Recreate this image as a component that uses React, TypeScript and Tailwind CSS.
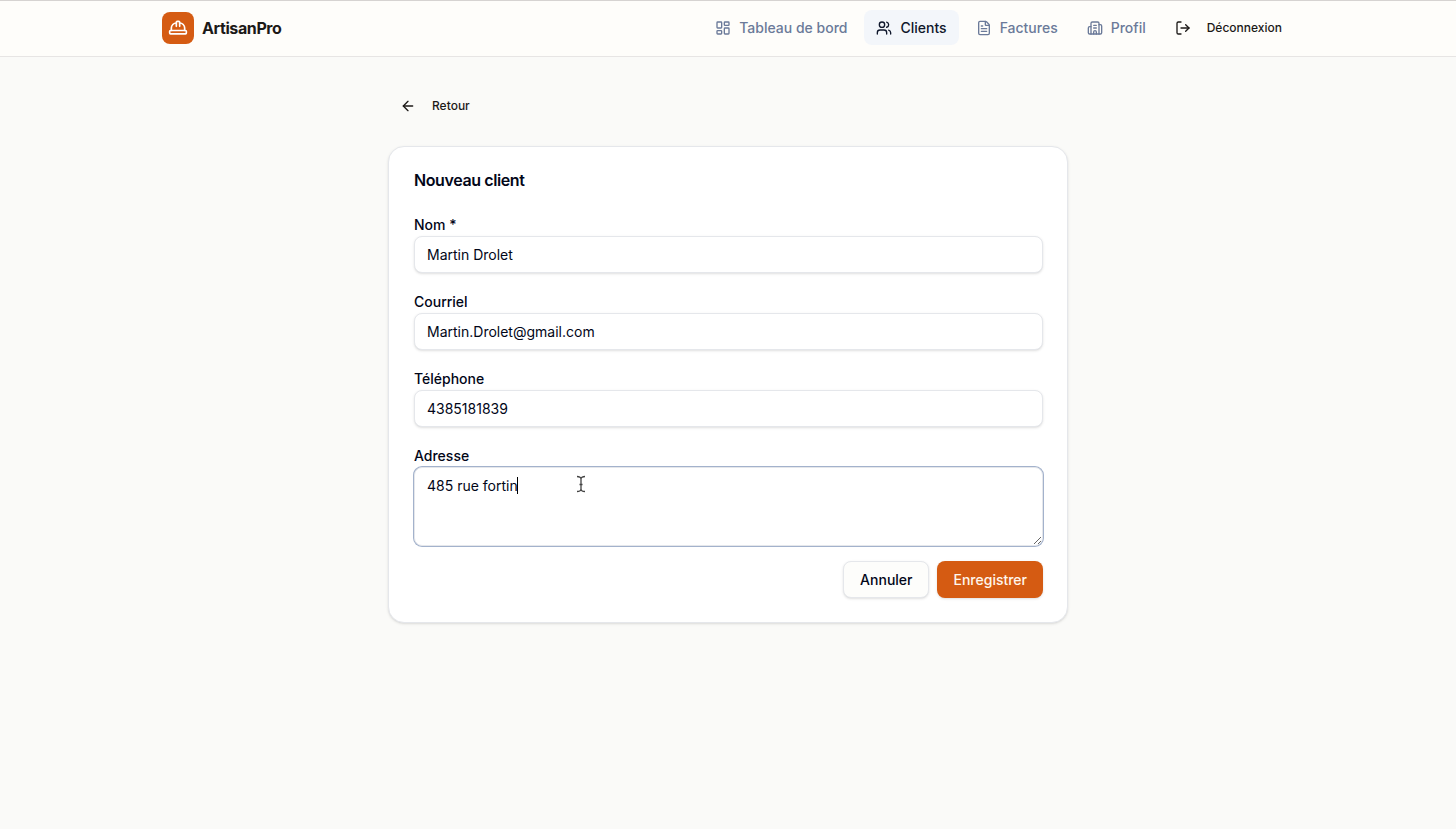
import { useState, type ReactNode } from 'react';
import {
  ArrowLeft,
  Building2,
  FileText,
  HardHat,
  LayoutDashboard,
  LogOut,
  Users,
  type LucideIcon,
} from 'lucide-react';

const NAV_ITEMS: { label: string; icon: LucideIcon; active?: boolean }[] = [
  { label: 'Tableau de bord', icon: LayoutDashboard },
  { label: 'Clients', icon: Users, active: true },
  { label: 'Factures', icon: FileText },
  { label: 'Profil', icon: Building2 },
];

const INPUT_CLASS =
  'block h-[37px] w-full rounded-lg border border-gray-200 bg-white px-3 text-[14px] text-slate-950 shadow-sm outline-none';

function Header() {
  return (
    <header className="border-y border-t-stone-300 border-b-stone-200 bg-[#fefdfa]">
      <div className="mx-auto flex h-[55px] max-w-[1132px] items-center justify-between pb-[2px]">
        <a href="#" className="flex items-center gap-2">
          <span className="flex size-8 items-center justify-center rounded-lg bg-[#d55b12] text-white">
            <HardHat size={20} />
          </span>
          <span className="text-[16px] font-bold tracking-tight text-stone-900">ArtisanPro</span>
        </a>
        <nav className="flex items-center gap-[5px]">
          {NAV_ITEMS.map(({ label, icon: Icon, active }) => (
            <a
              key={label}
              href="#"
              className={`flex h-[35px] items-center gap-2 rounded-lg px-3 text-[14px] font-medium ${
                active ? 'bg-[#f3f6fa] text-slate-900' : 'text-[#6b7a99]'
              }`}
            >
              <Icon size={16} />
              {label}
            </a>
          ))}
          <button
            type="button"
            className="flex h-8 items-center gap-4 rounded-lg px-3 text-[12px] font-medium text-stone-900"
          >
            <LogOut size={16} />
            Déconnexion
          </button>
        </nav>
      </div>
    </header>
  );
}

function Field({ id, label, children }: { id: string; label: string; children: ReactNode }) {
  return (
    <div>
      <label htmlFor={id} className="block pt-px text-[14px] leading-[22px] font-medium text-slate-950">
        {label}
      </label>
      {children}
    </div>
  );
}

function TextCursor() {
  return (
    <svg
      className="pointer-events-none absolute top-2 left-[162px]"
      width="10"
      height="18"
      viewBox="0 0 10 18"
      fill="none"
      stroke="#444"
      strokeWidth="1.3"
    >
      <path d="M1 1.5c2 0 4 .5 4 2.5 0-2 2-2.5 4-2.5M1 16.5c2 0 4-.5 4-2.5 0 2 2 2.5 4 2.5M5 4v10M3.5 9.5h3" />
    </svg>
  );
}

export default function App() {
  const [client, setClient] = useState({
    name: 'Martin Drolet',
    email: 'Martin.Drolet@gmail.com',
    phone: '4385181839',
    address: '485 rue fortin',
  });

  return (
    <div className="min-h-screen bg-[#fafaf8] font-[Inter,sans-serif]">
      <Header />
      <main className="mx-auto max-w-[680px] pt-[33px]">
        <button
          type="button"
          className="flex h-8 items-center gap-4 rounded-lg px-3 text-[12px] font-medium text-stone-900"
        >
          <ArrowLeft size={16} />
          Retour
        </button>

        <section className="mt-6 rounded-2xl border border-gray-200 bg-white py-6 pr-6 pl-[25px] shadow-sm">
          <h1 className="text-[16px] leading-[18px] font-semibold tracking-tight text-slate-950">
            Nouveau client
          </h1>
          <form className="mt-6" onSubmit={(e) => e.preventDefault()}>
            <div className="flex flex-col gap-[17px]">
              <Field id="name" label="Nom *">
                <input
                  id="name"
                  required
                  className={INPUT_CLASS}
                  value={client.name}
                  onChange={(e) => setClient({ ...client, name: e.target.value })}
                />
              </Field>
              <Field id="email" label="Courriel">
                <input
                  id="email"
                  type="email"
                  className={INPUT_CLASS}
                  value={client.email}
                  onChange={(e) => setClient({ ...client, email: e.target.value })}
                />
              </Field>
              <Field id="phone" label="Téléphone">
                <input
                  id="phone"
                  type="tel"
                  className={INPUT_CLASS}
                  value={client.phone}
                  onChange={(e) => setClient({ ...client, phone: e.target.value })}
                />
              </Field>
              <Field id="address" label="Adresse">
                <div className="relative">
                  <textarea
                    id="address"
                    className="block h-[79px] w-full resize-y rounded-lg border border-gray-200 bg-white px-3 py-[7px] text-[14px] leading-[22px] text-slate-950 ring-1 ring-[#a3b2cc] outline-none"
                    value={client.address}
                    onChange={(e) => setClient({ ...client, address: e.target.value })}
                  />
                  <span className="pointer-events-none absolute top-[10px] left-[103px] h-[17px] w-px bg-black" />
                  <TextCursor />
                </div>
              </Field>
            </div>
            <div className="mt-[15px] flex justify-end gap-2">
              <button
                type="button"
                className="h-[37px] rounded-lg border border-gray-200 bg-[#fdfdfb] px-4 text-[14px] font-medium text-slate-950 shadow-sm"
              >
                Annuler
              </button>
              <button
                type="submit"
                className="h-[37px] rounded-lg bg-[#d55b12] px-4 text-[14px] font-medium text-orange-50 shadow-sm"
              >
                Enregistrer
              </button>
            </div>
          </form>
        </section>
      </main>
    </div>
  );
}
